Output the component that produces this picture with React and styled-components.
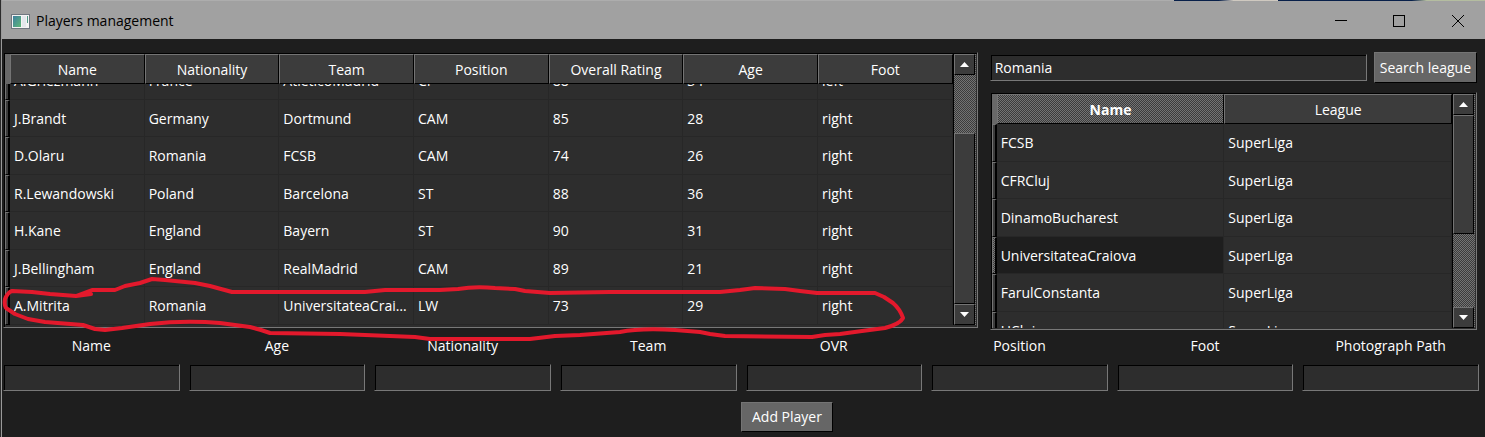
import React from "react";
import styled, { createGlobalStyle, css } from "styled-components";

const GlobalStyle = createGlobalStyle`
  *, *::before, *::after { box-sizing: border-box; }
  body {
    margin: 0;
    background: #1e1e1e;
    color: #fff;
    font-family: "Open Sans", "Noto Sans", sans-serif;
    font-size: 14px;
    line-height: 20px;
  }
  button, input { font: inherit; color: inherit; }
`;

const dither = css`
  background: repeating-conic-gradient(#747474 0 25%, #3c3c3c 0 50%) 0 0 / 2px 2px;
`;

const raised = css`
  border: 1px solid;
  border-color: #747474 #000 #000 #747474;
`;

const sunken = css`
  border: 1px solid;
  border-color: #1e1e1e #787878 #787878 #1e1e1e;
  box-shadow: inset 1px 1px 0 #000;
`;

const Window = styled.div`
  position: relative;
  min-height: 100vh;
  padding-left: 2px;
  background: linear-gradient(90deg, #2c2c2c 1px, #9a9a9a 1px 2px, #1e1e1e 2px);
`;

const TitleBar = styled.header`
  display: flex;
  align-items: center;
  height: 39px;
  padding: 2px 4px 0 9px;
  background: #a1a1a1;
  color: #000;
  border-top: 1px solid;
  border-image: linear-gradient(90deg, #adadad 79%, #08204a 79% 82%, #cfc9c0 83% 86%, #08204a 86% 95%, #b4bda0 96%) 1;
`;

const Title = styled.h1`
  flex: 1;
  margin: 0 0 0 6px;
  font-size: inherit;
  font-weight: 400;
`;

const CaptionButton = styled.button`
  display: flex;
  align-items: center;
  justify-content: center;
  width: 58px;
  height: 32px;
  padding: 0;
  border: 0;
  background: none;

  &:last-child { width: 46px; margin-left: 7px; }
  &:nth-last-child(3) { width: 46px; margin-right: 6px; }
`;

const Content = styled.main`
  padding: 13px 6px 6px 1px;
`;

const Panels = styled.div`
  display: grid;
  grid-template-columns: minmax(0, 2fr) minmax(0, 1fr);
  align-items: start;
  gap: 12px;
  padding-right: 2px;
`;

const LeagueColumn = styled.section`
  display: flex;
  flex-direction: column;
  gap: 9px;
`;

const SearchRow = styled.form`
  display: grid;
  grid-template-columns: minmax(0, 1fr) auto;
  align-items: center;
  gap: 7px;
`;

const TextInput = styled.input`
  width: 100%;
  height: 27px;
  padding: 0 4px;
  border-radius: 0;
  outline: none;
  background: #2d2d2d;
  ${sunken}
`;

const PushButton = styled.button`
  ${raised}
  height: ${(p) => (p.$compact ? 31 : 30)}px;
  padding: 0 ${(p) => (p.$compact ? 5 : 10)}px;
  background: #666;
  white-space: nowrap;
`;

const Frame = styled.div`
  ${sunken}
  display: flex;
  padding: 1px 1px ${(p) => p.$bottom}px 1px;
  background: #2d2d2d;
`;

const Table = styled.table`
  display: block;
  flex: 1;
  min-width: 0;
`;

const Head = styled.thead`
  display: block;
  background: #3c3c3c;
`;

const Body = styled.tbody`
  display: flex;
  flex-direction: column;
  justify-content: ${(p) => (p.$scrolledToEnd ? "flex-end" : "flex-start")};
  height: ${(p) => p.$height}px;
  overflow: hidden;
`;

const Row = styled.tr`
  display: grid;
  grid-template-columns: 5px repeat(${(p) => p.$columns}, minmax(0, 1fr));
  flex: none;
  height: 37px;

  &:nth-child(odd) { height: 38px; }
  ${Head} & { height: 30px; }
`;

const Corner = styled.td`
  padding: 0;
  background: #686868;
`;

const ColumnHeader = styled.th`
  ${raised}
  padding: 5px 0 0;
  font-weight: ${(p) => (p.$active ? 700 : 400)};
  line-height: 20px;
  text-align: center;
  ${(p) => p.$active && dither}
`;

const RowHandle = styled.td`
  padding: 0;
  background: #3c3c3c;
  border: solid;
  border-width: 1px 2px 1px 1px;
  border-color: #747474 #000 #000 #747474;
  ${(p) => p.$active && dither}
`;

const Cell = styled.td`
  padding: 9px 2px 0 4px;
  overflow: hidden;
  text-overflow: ellipsis;
  white-space: nowrap;
  border-right: 1px solid #272727;
  border-bottom: 1px solid #272727;
  background: ${(p) => (p.$selected ? "#1e1e1e" : "#2d2d2d")};
`;

const ScrollBar = styled.div`
  display: flex;
  flex-direction: column;
  width: 23px;
  padding-right: 1px;
  border-left: 1px solid #000;
  ${dither}
`;

const ScrollButton = styled.button`
  ${raised}
  display: flex;
  align-items: center;
  justify-content: center;
  height: 21px;
  padding: 0;
  background: #3c3c3c;
`;

const ScrollThumb = styled.div`
  ${raised}
  flex: ${(p) => p.$share};
  background: #3c3c3c;
`;

const ScrollGap = styled.div`
  flex: ${(p) => p.$share};
`;

const Fields = styled.div`
  display: grid;
  grid-template-columns: repeat(8, minmax(0, 1fr));
  gap: 9px;
  margin-top: 6px;
`;

const Field = styled.label`
  display: grid;
  gap: 8px;
  text-align: center;
`;

const Actions = styled.div`
  margin: 11px 0 0 50%;
`;

const Annotation = styled.svg`
  position: absolute;
  top: 270px;
  left: 0;
  pointer-events: none;
`;

const playerColumns = ["Name", "Nationality", "Team", "Position", "Overall Rating", "Age", "Foot"];

const players = [
  ["A.Griezmann", "France", "AtleticoMadrid", "CF", "88", "34", "left"],
  ["J.Brandt", "Germany", "Dortmund", "CAM", "85", "28", "right"],
  ["D.Olaru", "Romania", "FCSB", "CAM", "74", "26", "right"],
  ["R.Lewandowski", "Poland", "Barcelona", "ST", "88", "36", "right"],
  ["H.Kane", "England", "Bayern", "ST", "90", "31", "right"],
  ["J.Bellingham", "England", "RealMadrid", "CAM", "89", "21", "right"],
  ["A.Mitrita", "Romania", "UniversitateaCraiova", "LW", "73", "29", "right"],
];

const clubs = [
  ["FCSB", "SuperLiga"],
  ["CFRCluj", "SuperLiga"],
  ["DinamoBucharest", "SuperLiga"],
  ["UniversitateaCraiova", "SuperLiga"],
  ["FarulConstanta", "SuperLiga"],
  ["UCluj", "SuperLiga"],
];

const fieldNames = ["Name", "Age", "Nationality", "Team", "OVR", "Position", "Foot", "Photograph Path"];

function Scroller({ before, thumb, after }) {
  return (
    <ScrollBar>
      <ScrollButton type="button" aria-label="Scroll up">
        <svg width="9" height="5" viewBox="0 0 9 5"><path d="M4.5 0L9 5H0z" fill="#fff" /></svg>
      </ScrollButton>
      <ScrollGap $share={before} />
      <ScrollThumb $share={thumb} />
      <ScrollGap $share={after} />
      <ScrollButton type="button" aria-label="Scroll down">
        <svg width="9" height="5" viewBox="0 0 9 5"><path d="M0 0h9L4.5 5z" fill="#fff" /></svg>
      </ScrollButton>
    </ScrollBar>
  );
}

function DataGrid({ columns, rows, height, bottom, scrolledToEnd, activeColumn, activeRow, scroll }) {
  return (
    <Frame $bottom={bottom}>
      <Table>
        <Head>
          <Row $columns={columns.length}>
            <Corner />
            {columns.map((name, i) => (
              <ColumnHeader key={name} scope="col" $active={i === activeColumn}>{name}</ColumnHeader>
            ))}
          </Row>
        </Head>
        <Body $height={height} $scrolledToEnd={scrolledToEnd}>
          {rows.map((row, r) => (
            <Row key={row[0]} $columns={columns.length}>
              <RowHandle $active={r === activeRow} />
              {row.map((value, c) => (
                <Cell key={columns[c]} $selected={r === activeRow && c === activeColumn}>{value}</Cell>
              ))}
            </Row>
          ))}
        </Body>
      </Table>
      <Scroller {...scroll} />
    </Frame>
  );
}

export default function App() {
  return (
    <>
      <GlobalStyle />
      <Window>
        <TitleBar>
          <svg width="19" height="15" viewBox="0 0 19 15">
            <defs>
              <linearGradient id="screen" x1="0" y1="0" x2="1" y2="1">
                <stop offset="0" stopColor="#3f7fa0" />
                <stop offset="1" stopColor="#5fb878" />
              </linearGradient>
            </defs>
            <rect x=".5" y=".5" width="18" height="14" fill="#f4f4f4" stroke="#707780" />
            <rect x="2" y="2" width="8" height="11" fill="url(#screen)" />
            <rect x="11" y="2" width="4" height="11" fill="#e4e8ec" />
            <rect x="16" y="2" width="1" height="7" fill="#4f9a86" />
          </svg>
          <Title>Players management</Title>
          <CaptionButton type="button" aria-label="Minimize">
            <svg width="12" height="12" viewBox="0 0 12 12"><path d="M0 5.5h12" stroke="#000" /></svg>
          </CaptionButton>
          <CaptionButton type="button" aria-label="Maximize">
            <svg width="12" height="12" viewBox="0 0 12 12"><rect x=".5" y=".5" width="11" height="11" fill="none" stroke="#000" /></svg>
          </CaptionButton>
          <CaptionButton type="button" aria-label="Close">
            <svg width="12" height="12" viewBox="0 0 12 12"><path d="M0 0l12 12M12 0L0 12" stroke="#000" /></svg>
          </CaptionButton>
        </TitleBar>

        <Content>
          <Panels>
            <DataGrid
              columns={playerColumns}
              rows={players}
              height={241}
              bottom={2}
              scrolledToEnd
              scroll={{ before: 58, thumb: 171, after: 0 }}
            />
            <LeagueColumn>
              <SearchRow onSubmit={(e) => e.preventDefault()}>
                <TextInput aria-label="League country" defaultValue="Romania" />
                <PushButton $compact type="submit">Search league</PushButton>
              </SearchRow>
              <DataGrid
                columns={["Name", "League"]}
                rows={clubs}
                height={204}
                bottom={1}
                activeColumn={0}
                activeRow={3}
                scroll={{ before: 0, thumb: 119, after: 74 }}
              />
            </LeagueColumn>
          </Panels>

          <Fields>
            {fieldNames.map((name) => (
              <Field key={name}>
                {name}
                <TextInput />
              </Field>
            ))}
          </Fields>
          <Actions>
            <PushButton type="button">Add Player</PushButton>
          </Actions>
        </Content>

        <Annotation width="912" height="76" viewBox="0 270 912 76" fill="none" aria-hidden="true">
          <path
            d="M91 294L76 296L50 294L32 292L12 291Q8 292 5 299Q4 305 6 308L15 314L28 319L45 322L83 325L95 329L105 330L122 328L150 324Q185 320 220 323L250 327L261 330L270 333L340 334L415 337L430 339H530L555 336L580 335L620 332Q640 328 675 330L700 332L710 334L725 336L812 337L825 335L840 334L862 331L885 328Q900 324 903 318Q900 309 893 303L884 297L875 293H817L800 291L785 289L755 288L740 290L720 292H610L550 293L525 291L515 289L495 288Q475 286 458 289L440 290H385L365 292H232L210 286L195 283L165 280L152 279L140 283L125 286L115 290H92L76 296"
            stroke="#e3192c"
            strokeWidth="4"
            strokeLinecap="round"
            strokeLinejoin="round"
          />
        </Annotation>
      </Window>
    </>
  );
}
